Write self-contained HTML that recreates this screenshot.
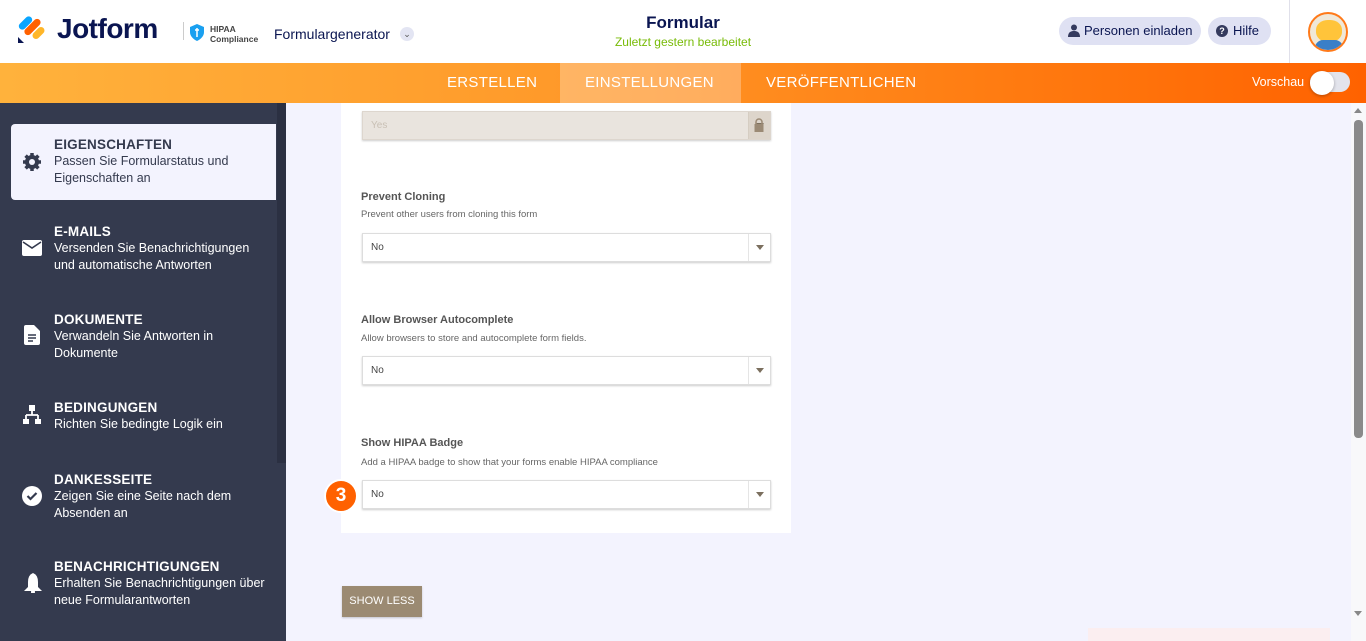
<!DOCTYPE html>
<html><head><meta charset="utf-8"><style>
*{margin:0;padding:0;box-sizing:border-box}
body{width:1366px;height:641px;overflow:hidden;font-family:"Liberation Sans",sans-serif;background:#f3f3fe;position:relative}
.hdr{position:absolute;left:0;top:0;width:1366px;height:63px;background:#fff}
.bar{position:absolute;left:0;top:63px;width:1366px;height:40px;background:linear-gradient(90deg,#ffb23c,#ff9a2a 40%,#ff7a10 75%,#ff6200)}
.tab{position:absolute;top:63px;height:40px;line-height:40px;color:#fff;font-size:15px;letter-spacing:.3px}
.side{position:absolute;left:0;top:103px;width:277px;height:538px;background:#343a4e}
.sstrip{position:absolute;left:277px;top:103px;width:9px;height:538px;background:#343a4e}
.item{position:absolute;left:54px;color:#fff;font-size:12.5px;line-height:17px}
.item b{display:block;font-size:13.5px;letter-spacing:.2px}
.ico{position:absolute;left:22px}
.panel{position:absolute;left:341px;top:103px;width:450px;height:430px;background:#fff}
.sel{position:absolute;left:362px;width:409px;height:29px;background:#fff;border:1px solid #ddd;box-shadow:0 1px 2px rgba(0,0,0,.2);font-size:10px;color:#444;line-height:27px;padding-left:8px}
.sel .dd{position:absolute;right:0;top:0;width:22px;height:27px;border-left:1px solid #e5e5e5}
.sel .dd:after{content:"";position:absolute;left:7px;top:11px;border:4px solid transparent;border-top:5px solid #7b6f5e}
.lbl{position:absolute;left:361px;font-size:11px;color:#555;font-weight:bold}
.desc{position:absolute;left:361px;font-size:9.5px;color:#666}
</style></head><body>
<div class="hdr">
 <svg style="position:absolute;left:17px;top:14px" width="28" height="30" viewBox="0 0 28 30">
  <rect x="5" y="1" width="7" height="16" rx="3.5" transform="rotate(45 8.5 9)" fill="#0aa5ff"/>
  <rect x="12" y="3" width="7" height="20" rx="3.5" transform="rotate(45 15.5 13)" fill="#ff6100"/>
  <rect x="18" y="12" width="7" height="14" rx="3.5" transform="rotate(45 21.5 19)" fill="#ffb629"/>
  <path d="M1 23 L1 29 L7 29 Z" fill="#0a1551"/>
 </svg>
 <div style="position:absolute;left:57px;top:13px;font-size:28px;font-weight:bold;color:#0a1551;letter-spacing:-.5px">Jotform</div>
 <div style="position:absolute;left:183px;top:22px;width:1px;height:18px;background:#ccc"></div>
 <svg style="position:absolute;left:190px;top:24px" width="14" height="17" viewBox="0 0 14 17"><path d="M7 0L14 3V8C14 12 11 15 7 17C3 15 0 12 0 8V3Z" fill="#1aa0f0"/><path d="M7 4V13M5 6H9" stroke="#fff" stroke-width="1.5"/></svg>
 <div style="position:absolute;left:210px;top:24px;font-size:8.5px;font-weight:bold;color:#444;line-height:10px">HIPAA<br>Compliance</div>
 <div style="position:absolute;left:274px;top:26px;font-size:14px;color:#0a1551">Formulargenerator</div>
 <div style="position:absolute;left:400px;top:27px;width:14px;height:14px;border-radius:50%;background:#e3e5f3;font-size:9px;text-align:center;line-height:14px;color:#555">⌄</div>
 <div style="position:absolute;left:0;width:1366px;top:13px;text-align:center;font-size:17px;font-weight:bold;color:#0a1551">Formular</div>
 <div style="position:absolute;left:0;width:1366px;top:35px;text-align:center;font-size:12px;color:#78bb07">Zuletzt gestern bearbeitet</div>
 <div style="position:absolute;left:1059px;top:17px;width:142px;height:28px;border-radius:14px;background:#dfe1f3;font-size:13px;color:#0a1551;line-height:28px;padding-left:25px">Personen einladen</div>
 <svg style="position:absolute;left:1068px;top:24px" width="12" height="13" viewBox="0 0 12 13"><circle cx="6" cy="3.5" r="3" fill="#343a5e"/><path d="M0 13C0 8 3 7 6 7S12 8 12 13Z" fill="#343a5e"/></svg>
 <div style="position:absolute;left:1208px;top:17px;width:63px;height:28px;border-radius:14px;background:#dfe1f3;font-size:13px;color:#0a1551;line-height:28px;padding-left:25px">Hilfe</div>
 <div style="position:absolute;left:1216px;top:25px;width:12px;height:12px;border-radius:50%;background:#343a5e;color:#fff;font-size:9px;text-align:center;line-height:12px;font-weight:bold">?</div>
 <div style="position:absolute;left:1289px;top:0;width:1px;height:63px;background:#e0e0ea"></div>
 <div style="position:absolute;left:1308px;top:12px;width:40px;height:40px;border-radius:50%;background:#f0e8d8;border:2px solid #ff7a1a;overflow:hidden"><div style="position:absolute;left:6px;top:6px;width:26px;height:22px;background:#ffc43a;border-radius:45%"></div><div style="position:absolute;left:5px;top:26px;width:28px;height:14px;background:#3a7fc8;border-radius:8px 8px 0 0"></div></div>
</div>
<div class="bar"></div>
<div style="position:absolute;left:560px;top:63px;width:181px;height:40px;background:rgba(255,255,255,.28)"></div>
<div class="tab" style="left:447px">ERSTELLEN</div>
<div class="tab" style="left:585px">EINSTELLUNGEN</div>
<div class="tab" style="left:766px">VERÖFFENTLICHEN</div>
<div style="position:absolute;left:1252px;top:75px;color:#fff;font-size:12.5px">Vorschau</div>
<div style="position:absolute;left:1310px;top:72px;width:40px;height:20px;border-radius:10px;background:#e3e4ec"></div>
<div style="position:absolute;left:1310px;top:71px;width:24px;height:24px;border-radius:50%;background:#fff;box-shadow:0 1px 3px rgba(0,0,0,.3)"></div>

<div class="side"></div><div class="sstrip"></div>
<div style="position:absolute;left:277px;top:103px;width:9px;height:360px;background:#2b3042"></div>
<div style="position:absolute;left:11px;top:124px;width:265px;height:76px;background:#f3f3fe;border-radius:4px 0 0 4px"></div>
<div class="item" style="top:136px;color:#343a4e"><b>EIGENSCHAFTEN</b>Passen Sie Formularstatus und<br>Eigenschaften an</div>
<svg class="ico" style="top:152px" width="20" height="20" viewBox="0 0 20 20"><circle cx="10" cy="10" r="7" fill="#343a4e"/><g stroke="#343a4e" stroke-width="3.5"><path d="M10 1V19M1 10H19M3.6 3.6L16.4 16.4M16.4 3.6L3.6 16.4"/></g><circle cx="10" cy="10" r="3" fill="#f3f3fe"/></svg>
<div class="item" style="top:223px"><b>E-MAILS</b>Versenden Sie Benachrichtigungen<br>und automatische Antworten</div>
<svg class="ico" style="top:240px" width="20" height="16" viewBox="0 0 20 16"><rect x="0" y="0" width="20" height="16" rx="2" fill="#fff"/><path d="M1 2L10 8L19 2" stroke="#343a4e" stroke-width="1.6" fill="none"/></svg>
<div class="item" style="top:311px"><b>DOKUMENTE</b>Verwandeln Sie Antworten in<br>Dokumente</div>
<svg class="ico" style="top:325px;left:24px" width="16" height="20" viewBox="0 0 16 20"><path d="M0 2Q0 0 2 0H10L16 6V18Q16 20 14 20H2Q0 20 0 18Z" fill="#fff"/><path d="M4 10H12M4 13H12M4 16H9" stroke="#343a4e" stroke-width="1.4"/></svg>
<div class="item" style="top:399px"><b>BEDINGUNGEN</b>Richten Sie bedingte Logik ein</div>
<svg class="ico" style="top:405px" width="20" height="20" viewBox="0 0 20 20"><rect x="7" y="0" width="6" height="6" fill="#fff"/><path d="M10 6V10M4 10H16M4 10V14M16 10V14" stroke="#fff" stroke-width="1.8" fill="none"/><rect x="1" y="14" width="6" height="5" fill="#fff"/><rect x="13" y="14" width="6" height="5" fill="#fff"/></svg>
<div class="item" style="top:471px"><b>DANKESSEITE</b>Zeigen Sie eine Seite nach dem<br>Absenden an</div>
<svg class="ico" style="top:486px" width="20" height="20" viewBox="0 0 20 20"><circle cx="10" cy="10" r="10" fill="#fff"/><path d="M5.5 10L8.5 13L14.5 7" stroke="#343a4e" stroke-width="2.2" fill="none"/></svg>
<div class="item" style="top:558px"><b>BENACHRICHTIGUNGEN</b>Erhalten Sie Benachrichtigungen über<br>neue Formularantworten</div>
<svg class="ico" style="top:573px;left:24px" width="18" height="20" viewBox="0 0 18 20"><path d="M9 0Q14 2 14 9V14L18 18H0L4 14V9Q4 2 9 0Z" fill="#fff"/><circle cx="9" cy="19" r="2" fill="#fff"/></svg>

<div class="panel"></div>
<div class="sel" style="top:111px;background:#e9e4de;color:#c9c0b5;border-color:#ddd6ce">Yes<div class="dd" style="background:#ddd5cb;border-color:#d5cdc2"></div></div>
<svg style="position:absolute;left:754px;top:118px" width="10" height="14" viewBox="0 0 10 14"><path d="M2 6V4A3 3 0 0 1 8 4V6" stroke="#9b8a75" stroke-width="1.5" fill="none"/><rect x="0.5" y="6" width="9" height="8" fill="#9b8a75"/></svg>
<div class="lbl" style="top:191px">Prevent Cloning</div>
<div class="desc" style="top:209px">Prevent other users from cloning this form</div>
<div class="sel" style="top:233px">No<div class="dd"></div></div>
<div class="lbl" style="top:314px">Allow Browser Autocomplete</div>
<div class="desc" style="top:333px">Allow browsers to store and autocomplete form fields.</div>
<div class="sel" style="top:356px">No<div class="dd"></div></div>
<div class="lbl" style="top:437px">Show HIPAA Badge</div>
<div class="desc" style="top:457px">Add a HIPAA badge to show that your forms enable HIPAA compliance</div>
<div class="sel" style="top:480px">No<div class="dd"></div></div>
<div style="position:absolute;left:324px;top:479px;width:34px;height:34px;border-radius:50%;background:#ff6100;border:2px solid #fff;color:#fff;font-weight:bold;font-size:19px;text-align:center;line-height:30px">3</div>
<div style="position:absolute;left:342px;top:586px;width:80px;height:31px;background:#9b8a72;color:#fff;font-size:11px;text-align:center;line-height:31px;box-shadow:0 1px 2px rgba(0,0,0,.2)">SHOW LESS</div>
<div style="position:absolute;left:1088px;top:628px;width:242px;height:13px;background:#fbeef0"></div>

<div style="position:absolute;left:1351px;top:103px;width:15px;height:538px;background:#f8f8fa"></div>
<div style="position:absolute;left:1354px;top:108px;border:4px solid transparent;border-bottom:5px solid #888;border-top:0"></div>
<div style="position:absolute;left:1354px;top:120px;width:9px;height:318px;border-radius:4px;background:#8a8a8a"></div>
<div style="position:absolute;left:1354px;top:611px;border:4px solid transparent;border-top:5px solid #888;border-bottom:0"></div>
</body></html>
